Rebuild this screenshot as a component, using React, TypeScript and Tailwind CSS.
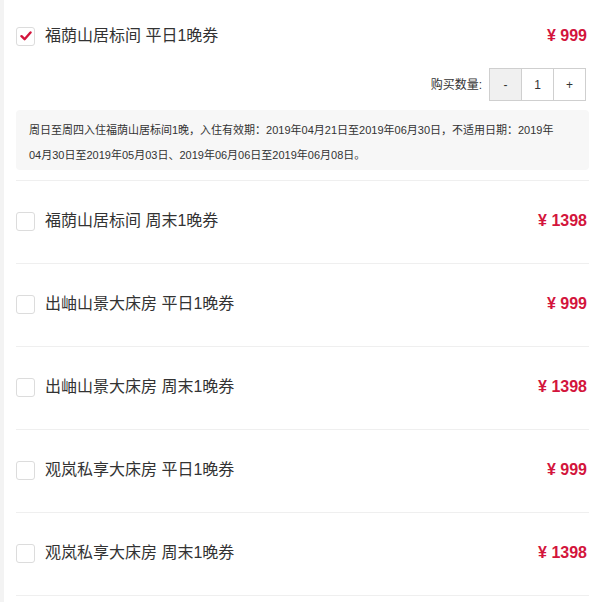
import React, { useState } from "react";

type Item = { id: number; name: string; price: string; desc?: string };

const items: Item[] = [
  {
    id: 1,
    name: "福荫山居标间 平日1晚券",
    price: "999",
    desc: "周日至周四入住福荫山居标间1晚，入住有效期：2019年04月21日至2019年06月30日，不适用日期：2019年04月30日至2019年05月03日、2019年06月06日至2019年06月08日。",
  },
  { id: 2, name: "福荫山居标间 周末1晚券", price: "1398" },
  { id: 3, name: "出岫山景大床房 平日1晚券", price: "999" },
  { id: 4, name: "出岫山景大床房 周末1晚券", price: "1398" },
  { id: 5, name: "观岚私享大床房 平日1晚券", price: "999" },
  { id: 6, name: "观岚私享大床房 周末1晚券", price: "1398" },
];

const font = { fontFamily: '"Liberation Sans", "Noto Sans CJK SC", sans-serif' };

const Checkbox: React.FC<{ checked: boolean }> = ({ checked }) => (
  <span className="w-[19px] h-[19px] border border-[#dcdcdc] rounded-[3px] bg-white flex items-center justify-center shrink-0">
    {checked && (
      <svg width="12" height="10" viewBox="0 0 12 10">
        <path d="M1.5 5.2 L4.6 8.2 L10.5 1.5" fill="none" stroke="#d3153c" strokeWidth="2.4" strokeLinecap="round" strokeLinejoin="round" />
      </svg>
    )}
  </span>
);

const App: React.FC = () => {
  const [selected] = useState(1);
  const [qty] = useState(1);

  return (
    <div className="flex w-[600px] min-h-[602px] bg-white" style={font}>
      {/* left strip */}
      <div className="w-[4px] bg-[#f3f3f3] shrink-0" />

      <div className="flex-1 pl-[12px] pr-[11px]">
        {items.map((item) => {
          const active = item.id === selected;
          return (
            <div
              key={item.id}
              className={`border-b border-[#efefef] ${active ? "pt-[26px] pb-[10px]" : "pt-[30px] pb-[32px]"}`}
            >
              <div className="flex items-center h-5">
                <Checkbox checked={active} />
                <span className="ml-[10px] text-[16px] text-[#333]">{item.name}</span>
                <span className="ml-auto pr-[2px] text-[16px] font-bold text-[#d3153c]">¥ {item.price}</span>
              </div>

              {active && (
                <>
                  <div className="flex items-center justify-end mt-[22px] pr-[3px]">
                    <span className="text-[12px] text-[#333] mr-[7px]">购买数量:</span>
                    <div className="flex border border-[#cfcfcf] h-[33px] text-[12px] text-[#333]">
                      <span className="w-[32px] flex items-center justify-center bg-[#f0f0f0] border-r border-[#cfcfcf]">-</span>
                      <span className="w-[32px] flex items-center justify-center border-r border-[#cfcfcf]">{qty}</span>
                      <span className="w-[31px] flex items-center justify-center">+</span>
                    </div>
                  </div>

                  <div className="mt-[9px] bg-[#f7f7f7] rounded-[4px] pl-[13px] pr-[24px] pt-[8px] pb-[2px] text-[11px] leading-[25px] text-[#333]">
                    {item.desc}
                  </div>
                </>
              )}
            </div>
          );
        })}
      </div>
    </div>
  );
};

export default App;
